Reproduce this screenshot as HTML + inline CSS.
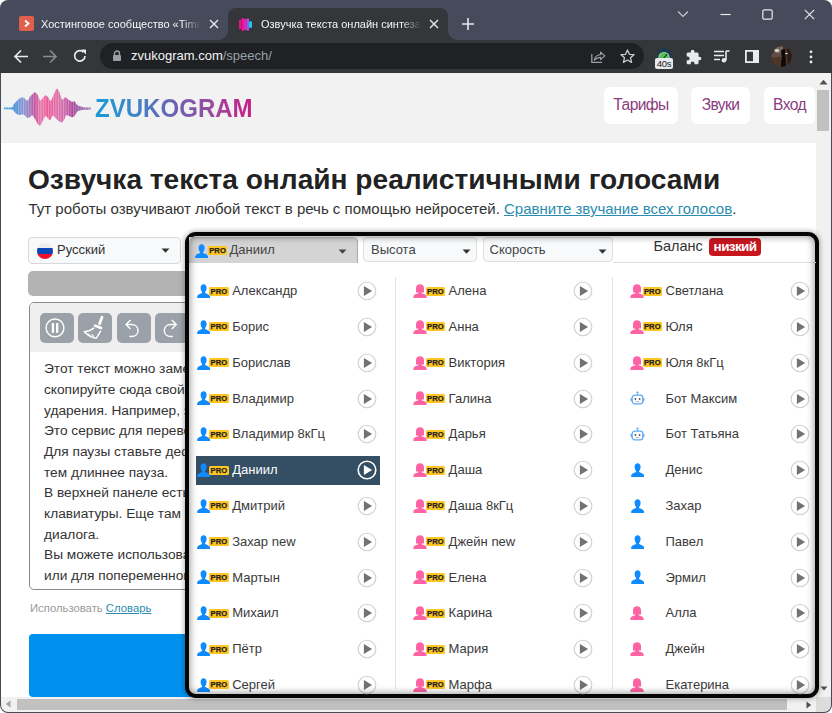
<!DOCTYPE html>
<html><head><meta charset="utf-8">
<style>
*{box-sizing:border-box}
html,body{margin:0;padding:0}
body{width:832px;height:713px;overflow:hidden;position:relative;background:#fff;font-family:"Liberation Sans",sans-serif}
.a{position:absolute}
#win{left:0;top:0;width:832px;height:713px;background:#454b5a;border-radius:8px}
#toolbar{left:0;top:40px;width:832px;height:33px;background:#35363a}
#page{left:1px;top:73px;width:815px;height:624px;background:#fff;overflow:hidden}
#vsb{left:816px;top:73px;width:15px;height:624px;background:#f1f1f1}
#hsb{left:1px;top:697px;width:815px;height:15px;background:#f1f1f1;border-radius:0 0 0 7px}
#corner{left:816px;top:697px;width:15px;height:15px;background:#dcdcdc;border-radius:0 0 7px 0}
.btn{background:#fff;border-radius:6px;color:#8a3c80;font-size:15.6px;letter-spacing:-0.6px;line-height:36px;text-align:center;white-space:nowrap}
.tb{top:313px;width:34px;height:29.6px;background:#9aa1a8;border-radius:5px}
.pro{width:19.6px;height:9px;background:#ffc520;border-radius:1.5px;font-weight:bold;font-size:7.6px;line-height:9.8px;color:#222;-webkit-text-stroke:0.25px #222;text-align:center;letter-spacing:0.1px}
.sel2{background:#f8f9fa;border:1px solid #dcdee0;border-radius:4px}
</style></head>
<body>
<div id="win" class="a"></div>
<!-- tabs -->
<div class="a" style="left:19px;top:16px;width:15px;height:15px;background:#e0604c;border-radius:2px"></div>
<svg class="a" style="left:19px;top:16px" width="15" height="15"><path d="M6 4.5 L9.5 7.5 L6 10.5" stroke="#fff" stroke-width="1.8" fill="none"/></svg>
<div class="a" style="left:41px;top:17px;width:162px;height:14px;font-size:11px;line-height:14px;color:#f4f5f6;white-space:nowrap;overflow:hidden;-webkit-mask-image:linear-gradient(to right,#000 calc(100% - 22px),transparent calc(100% - 2px))">Хостинговое сообщество «Timeweb»</div>
<svg class="a" style="left:209px;top:19px" width="10" height="10"><path d="M1 1L9 9M9 1L1 9" stroke="#e8eaed" stroke-width="1.4"/></svg>
<!-- active tab -->
<div class="a" style="left:228px;top:8px;width:220px;height:32px;background:#35363a;border-radius:8px 8px 0 0"></div>
<div class="a" style="left:218px;top:30px;width:10px;height:10px;background:radial-gradient(circle at 0 0,transparent 9.5px,#35363a 10.5px)"></div>
<div class="a" style="left:448px;top:30px;width:10px;height:10px;background:radial-gradient(circle at 100% 0,transparent 9.5px,#35363a 10.5px)"></div>
<svg class="a" style="left:238px;top:16px" width="16" height="16">
<rect x="1" y="4" width="2.5" height="9" fill="#e0148c"/><rect x="3.5" y="2" width="2.5" height="13" fill="#ee1090"/><rect x="6" y="3" width="2.5" height="11" fill="#d030c0"/><rect x="8.5" y="2.5" width="2.5" height="12" fill="#b050e0"/><rect x="11" y="5" width="3" height="7" rx="1.5" fill="#10d0f0"/>
</svg>
<div class="a" style="left:261px;top:17px;width:162px;height:14px;font-size:11px;line-height:14px;color:#f4f5f6;white-space:nowrap;overflow:hidden;-webkit-mask-image:linear-gradient(to right,#000 calc(100% - 22px),transparent calc(100% - 2px))">Озвучка текста онлайн синтезатор</div>
<svg class="a" style="left:429px;top:19px" width="10" height="10"><path d="M1 1L9 9M9 1L1 9" stroke="#e8eaed" stroke-width="1.4"/></svg>
<svg class="a" style="left:462px;top:18px" width="12" height="12"><path d="M6 0V12M0 6H12" stroke="#e8eaed" stroke-width="1.6"/></svg>
<!-- window controls -->
<svg class="a" style="left:677px;top:10px" width="12" height="8"><path d="M1 1.5L6 6.5L11 1.5" stroke="#c8cacd" stroke-width="1.2" fill="none"/></svg>
<svg class="a" style="left:720px;top:13px" width="11" height="3"><path d="M0.5 1.5H10.5" stroke="#e8eaed" stroke-width="1.2"/></svg>
<svg class="a" style="left:762px;top:9px" width="11" height="11"><rect x="0.8" y="0.8" width="9.4" height="9.4" rx="1.5" stroke="#e8eaed" stroke-width="1.2" fill="none"/></svg>
<svg class="a" style="left:804px;top:9px" width="11" height="11"><path d="M0.8 0.8L10.2 10.2M10.2 0.8L0.8 10.2" stroke="#e8eaed" stroke-width="1.2"/></svg>

<!-- toolbar -->
<div id="toolbar" class="a"></div>
<svg class="a" style="left:13px;top:49px" width="16" height="15"><path d="M15 7.5H2.5M8 1.5L2 7.5L8 13.5" stroke="#e8eaed" stroke-width="1.7" fill="none"/></svg>
<svg class="a" style="left:42px;top:49px" width="16" height="15"><path d="M1 7.5H13.5M8 1.5L14 7.5L8 13.5" stroke="#8a8b8e" stroke-width="1.7" fill="none"/></svg>
<svg class="a" style="left:72px;top:48px" width="16" height="16"><path d="M13 8A5.2 5.2 0 1 1 11.5 4.2" stroke="#e8eaed" stroke-width="1.7" fill="none"/><path d="M9 1.5H14V6.5Z" fill="#e8eaed"/></svg>
<div class="a" style="left:100px;top:43px;width:544px;height:26px;background:#202124;border-radius:13px"></div>
<svg class="a" style="left:112px;top:50px" width="10" height="12"><path d="M2.5 5V3.5A2.5 2.5 0 0 1 7.5 3.5V5" stroke="#9aa0a6" stroke-width="1.4" fill="none"/><rect x="1" y="5" width="8" height="6" rx="1" fill="#9aa0a6"/></svg>
<div class="a" style="left:131px;top:48px;font-size:13px;line-height:16px;color:#f4f5f6;white-space:nowrap">zvukogram.com<span style="color:#9aa0a6">/speech/</span></div>
<svg class="a" style="left:590px;top:49px" width="16" height="15"><path d="M1.8 5V13.4H12" stroke="#9aa0a6" stroke-width="1.3" fill="none"/><path d="M4.3 11.2C4.8 8 7.5 5.6 10.6 5.6V3.2L14.8 6.9L10.6 10.6V8.3C8 8.3 6 9.3 4.3 11.2Z" stroke="#9aa0a6" stroke-width="1.2" fill="none" stroke-linejoin="round"/></svg>
<svg class="a" style="left:620px;top:49px" width="15" height="15"><path d="M7.5 1L9.4 5.3L14 5.7L10.5 8.8L11.6 13.4L7.5 11L3.4 13.4L4.5 8.8L1 5.7L5.6 5.3Z" stroke="#c8cacd" stroke-width="1.3" fill="none" stroke-linejoin="round"/></svg>
<svg class="a" style="left:654px;top:46px" width="20" height="14"><rect x="8.3" y="2.2" width="3.4" height="2.6" fill="#0b3b5c"/><path d="M3.2 5.2L5 3.6M16.8 5.2L15 3.6" stroke="#0b3b5c" stroke-width="1.4"/><circle cx="10" cy="11.5" r="6.9" fill="#0b3b5c"/><circle cx="10" cy="11.5" r="5.6" fill="#cfe6d8"/><circle cx="10" cy="11.5" r="4.9" fill="#5cbf4c"/><path d="M9.6 12.2L13.2 8.2" stroke="#0b3b5c" stroke-width="1.2"/></svg>
<div class="a" style="left:655px;top:58px;width:18px;height:11px;background:#e8eaed;border-radius:2px;font-size:9.5px;line-height:11.5px;color:#202124;text-align:center;letter-spacing:-0.2px">40s</div>
<svg class="a" style="left:685.5px;top:48.5px" width="16" height="16" viewBox="1 0 23 23"><path d="M20.5 11H19V7c0-1.1-.9-2-2-2h-4V3.5C13 2.12 11.88 1 10.5 1S8 2.12 8 3.5V5H4c-1.1 0-1.99.9-1.99 2v3.8H3.5c1.49 0 2.7 1.210 2.7 2.7s-1.21 2.7-2.7 2.7H2V20c0 1.1.9 2 2 2h3.8v-1.5c0-1.49 1.21-2.7 2.7-2.7 1.49 0 2.7 1.21 2.7 2.7V22H17c1.1 0 2-.9 2-2v-4h1.5c1.38 0 2.5-1.12 2.5-2.5S21.88 11 20.5 11z" fill="#e8eaed"/></svg>
<svg class="a" style="left:714px;top:50px" width="16" height="13"><path d="M0 1.5H10M0 5.5H10M0 9.5H6" stroke="#e8eaed" stroke-width="1.6"/><path d="M12 1V10" stroke="#e8eaed" stroke-width="1.6"/><path d="M12 1H15.5" stroke="#e8eaed" stroke-width="1.6"/><circle cx="10" cy="10.2" r="2.3" fill="#e8eaed"/></svg>
<svg class="a" style="left:745px;top:50px" width="14" height="13"><rect x="0.9" y="0.9" width="12.2" height="11.2" stroke="#e8eaed" stroke-width="1.8" fill="none"/><rect x="8" y="1" width="5" height="11" fill="#e8eaed"/></svg>
<svg class="a" style="left:771.2px;top:45.5px" width="21" height="21"><defs><clipPath id="avc"><circle cx="10.5" cy="10.5" r="10.2"/></clipPath></defs><g clip-path="url(#avc)"><rect width="21" height="21" fill="#4a3224"/><path d="M0 9L4 5L10 4L10.5 11L0 12Z" fill="#5e4c44"/><path d="M3 0H12V5L7 8L3 6Z" fill="#76665c"/><path d="M10 4L14 3L15 21H9L11 12Z" fill="#0c0a08"/><path d="M16 0H21V21H17Z" fill="#2a1a12"/><path d="M0 12L10 11V21H0Z" fill="#4e3526"/><ellipse cx="6" cy="4.5" rx="2.2" ry="1.6" fill="#d8d4d0"/><ellipse cx="15.5" cy="7.5" rx="1.6" ry="0.8" fill="#c8c4c0"/></g></svg>
<svg class="a" style="left:809.3px;top:49.5px" width="4" height="14"><circle cx="2" cy="1.8" r="1.4" fill="#e8eaed"/><circle cx="2" cy="6.9" r="1.4" fill="#e8eaed"/><circle cx="2" cy="12" r="1.4" fill="#e8eaed"/></svg>

<!-- page -->
<div id="page" class="a"></div>
<div class="a" style="left:1px;top:73px;width:815px;height:70px;background:#f2f2f2"></div>
<svg class="a" style="left:0;top:72px" width="100" height="71" viewBox="0 72 100 71">
<defs><linearGradient id="wg" x1="4" x2="91" y1="0" y2="0" gradientUnits="userSpaceOnUse"><stop offset="0" stop-color="#40a8e8"/><stop offset="0.12" stop-color="#4a90d8"/><stop offset="0.22" stop-color="#8a9ad4"/><stop offset="0.3" stop-color="#a078b8"/><stop offset="0.35" stop-color="#c050a0"/><stop offset="0.42" stop-color="#e87aaa"/><stop offset="0.5" stop-color="#ec5a9a"/><stop offset="0.6" stop-color="#e070a8"/><stop offset="0.7" stop-color="#cc6aac"/><stop offset="0.78" stop-color="#b04a98"/><stop offset="0.86" stop-color="#9a60aa"/><stop offset="1" stop-color="#a080b8"/></linearGradient>
<pattern id="stripes" x="0.5" y="0" width="2.5" height="10" patternUnits="userSpaceOnUse"><rect x="0" y="0" width="0.9" height="10" fill="#fff" fill-opacity="0.3"/></pattern></defs>
<path d="M4.0 107.6C5.3 107.5 10.4 107.8 12.0 107.3C13.6 106.8 12.8 105.4 13.5 104.5C14.2 103.6 15.0 103.0 16.0 102.0C17.0 101.0 18.5 99.3 19.5 98.6C20.5 97.8 21.2 97.6 22.0 97.5C22.8 97.4 23.1 97.3 24.0 97.8C24.9 98.3 26.5 100.9 27.5 100.7C28.5 100.5 29.2 97.7 30.0 96.6C30.8 95.5 31.7 94.9 32.5 94.2C33.3 93.5 34.1 92.0 35.0 92.2C35.9 92.4 37.2 94.1 38.0 95.4C38.8 96.7 39.3 99.6 40.0 100.2C40.7 100.8 41.2 99.8 42.0 99.0C42.8 98.2 44.2 96.0 45.0 95.4C45.8 94.9 45.9 95.4 46.5 95.7C47.1 96.0 47.8 96.6 48.5 97.5C49.2 98.4 49.8 101.2 50.5 101.0C51.2 100.8 52.0 98.6 53.0 96.6C54.0 94.6 55.5 89.8 56.5 88.9C57.5 88.0 58.1 89.5 59.0 91.3C59.9 93.1 61.1 98.4 62.0 99.5C62.9 100.6 63.8 98.1 64.5 97.8C65.2 97.5 65.2 97.1 66.0 97.5C66.8 97.9 68.0 99.4 69.0 100.1C70.0 100.8 71.1 101.7 72.0 101.9C72.9 102.1 73.7 100.8 74.5 101.3C75.3 101.8 76.1 104.0 77.0 104.8C77.9 105.6 78.8 105.9 80.0 106.3C81.2 106.7 82.2 107.0 84.0 107.2C85.8 107.4 89.8 107.5 91.0 107.6L91.0 109.4C89.8 109.5 85.8 109.6 84.0 109.8C82.2 110.0 81.2 110.2 80.0 110.5C78.8 110.8 77.9 111.0 77.0 111.9C76.1 112.8 75.3 115.1 74.5 116.0C73.7 116.9 72.9 117.2 72.0 117.2C71.1 117.2 70.0 116.3 69.0 116.0C68.0 115.7 66.8 114.9 66.0 115.4C65.2 115.9 65.2 117.9 64.5 119.0C63.8 120.1 62.9 121.8 62.0 122.2C61.1 122.6 59.9 121.8 59.0 121.3C58.1 120.8 57.5 120.0 56.5 119.0C55.5 118.0 54.0 115.3 53.0 115.4C52.0 115.5 51.2 119.2 50.5 119.8C49.8 120.4 49.2 119.5 48.5 119.0C47.8 118.5 47.1 116.9 46.5 116.5C45.9 116.1 45.8 115.6 45.0 116.6C44.2 117.6 42.8 121.0 42.0 122.5C41.2 124.0 40.7 125.1 40.0 125.4C39.3 125.7 38.8 125.3 38.0 124.2C37.2 123.1 35.9 120.5 35.0 119.0C34.1 117.5 33.3 115.7 32.5 115.4C31.7 115.1 30.8 116.6 30.0 117.0C29.2 117.4 28.5 118.4 27.5 118.0C26.5 117.6 24.9 115.4 24.0 114.8C23.1 114.2 22.8 114.5 22.0 114.5C21.2 114.5 20.5 115.2 19.5 115.0C18.5 114.8 17.0 114.2 16.0 113.5C15.0 112.8 14.2 111.2 13.5 110.5C12.8 109.8 13.6 109.7 12.0 109.5C10.4 109.3 5.3 109.3 4.0 109.3Z" fill="url(#wg)"/>
<path d="M4.0 107.6C5.3 107.5 10.4 107.8 12.0 107.3C13.6 106.8 12.8 105.4 13.5 104.5C14.2 103.6 15.0 103.0 16.0 102.0C17.0 101.0 18.5 99.3 19.5 98.6C20.5 97.8 21.2 97.6 22.0 97.5C22.8 97.4 23.1 97.3 24.0 97.8C24.9 98.3 26.5 100.9 27.5 100.7C28.5 100.5 29.2 97.7 30.0 96.6C30.8 95.5 31.7 94.9 32.5 94.2C33.3 93.5 34.1 92.0 35.0 92.2C35.9 92.4 37.2 94.1 38.0 95.4C38.8 96.7 39.3 99.6 40.0 100.2C40.7 100.8 41.2 99.8 42.0 99.0C42.8 98.2 44.2 96.0 45.0 95.4C45.8 94.9 45.9 95.4 46.5 95.7C47.1 96.0 47.8 96.6 48.5 97.5C49.2 98.4 49.8 101.2 50.5 101.0C51.2 100.8 52.0 98.6 53.0 96.6C54.0 94.6 55.5 89.8 56.5 88.9C57.5 88.0 58.1 89.5 59.0 91.3C59.9 93.1 61.1 98.4 62.0 99.5C62.9 100.6 63.8 98.1 64.5 97.8C65.2 97.5 65.2 97.1 66.0 97.5C66.8 97.9 68.0 99.4 69.0 100.1C70.0 100.8 71.1 101.7 72.0 101.9C72.9 102.1 73.7 100.8 74.5 101.3C75.3 101.8 76.1 104.0 77.0 104.8C77.9 105.6 78.8 105.9 80.0 106.3C81.2 106.7 82.2 107.0 84.0 107.2C85.8 107.4 89.8 107.5 91.0 107.6L91.0 109.4C89.8 109.5 85.8 109.6 84.0 109.8C82.2 110.0 81.2 110.2 80.0 110.5C78.8 110.8 77.9 111.0 77.0 111.9C76.1 112.8 75.3 115.1 74.5 116.0C73.7 116.9 72.9 117.2 72.0 117.2C71.1 117.2 70.0 116.3 69.0 116.0C68.0 115.7 66.8 114.9 66.0 115.4C65.2 115.9 65.2 117.9 64.5 119.0C63.8 120.1 62.9 121.8 62.0 122.2C61.1 122.6 59.9 121.8 59.0 121.3C58.1 120.8 57.5 120.0 56.5 119.0C55.5 118.0 54.0 115.3 53.0 115.4C52.0 115.5 51.2 119.2 50.5 119.8C49.8 120.4 49.2 119.5 48.5 119.0C47.8 118.5 47.1 116.9 46.5 116.5C45.9 116.1 45.8 115.6 45.0 116.6C44.2 117.6 42.8 121.0 42.0 122.5C41.2 124.0 40.7 125.1 40.0 125.4C39.3 125.7 38.8 125.3 38.0 124.2C37.2 123.1 35.9 120.5 35.0 119.0C34.1 117.5 33.3 115.7 32.5 115.4C31.7 115.1 30.8 116.6 30.0 117.0C29.2 117.4 28.5 118.4 27.5 118.0C26.5 117.6 24.9 115.4 24.0 114.8C23.1 114.2 22.8 114.5 22.0 114.5C21.2 114.5 20.5 115.2 19.5 115.0C18.5 114.8 17.0 114.2 16.0 113.5C15.0 112.8 14.2 111.2 13.5 110.5C12.8 109.8 13.6 109.7 12.0 109.5C10.4 109.3 5.3 109.3 4.0 109.3Z" fill="url(#stripes)"/>
</svg>
<div class="a" style="left:94.5px;top:91.5px;font-weight:bold;font-size:25px;line-height:32px;white-space:nowrap;transform:scaleX(0.962);transform-origin:0 0;background:linear-gradient(90deg,#1a9cd8 0%,#3d86c8 25%,#6a62b0 50%,#9a4a9e 75%,#cc1c88 100%);-webkit-background-clip:text;background-clip:text;color:transparent">ZVUKOGRAM</div>
<div class="a btn" style="left:604px;top:87px;width:74px;height:37px">Тарифы</div>
<div class="a btn" style="left:691px;top:87px;width:59px;height:37px">Звуки</div>
<div class="a btn" style="left:764px;top:87px;width:51px;height:37px">Вход</div>
<div class="a" style="left:28px;top:162.5px;font-weight:bold;font-size:28.1px;line-height:34px;color:#222;white-space:nowrap">Озвучка текста онлайн реалистичными голосами</div>
<div class="a" style="left:28.5px;top:199px;font-size:15px;line-height:20px;color:#333;white-space:nowrap">Тут роботы озвучивают любой текст в речь с помощью нейросетей. <span style="color:#2b8cb0;text-decoration:underline">Сравните звучание всех голосов</span>.</div>
<!-- left select -->
<div class="a" style="left:28px;top:237px;width:153px;height:27px;background:#f8f9fa;border:1px solid #d6d8da;border-radius:4px"></div>
<div class="a" style="left:36.5px;top:242.5px;width:16.5px;height:16.5px;border-radius:50%;background:linear-gradient(#eeeeee 0 33%,#0c47b7 33% 66%,#f0102a 66%)"></div>
<div class="a" style="left:57px;top:237px;font-size:13px;line-height:26px;color:#333;white-space:nowrap">Русский</div>
<svg class="a" style="left:161px;top:248px" width="9" height="5"><path d="M0.5 0.5H8.5L4.5 4.8Z" fill="#333"/></svg>
<div class="a" style="left:28px;top:271px;width:400px;height:25px;background:#b3b3b3;border-radius:5px"></div>
<!-- editor -->
<div class="a" style="left:28.5px;top:302px;width:400px;height:288px;border:1.5px solid #8a8a8a;border-radius:5px;background:#fff;overflow:hidden">
 <div class="a" style="left:0;top:0;width:400px;height:49.3px;background:#efefef"></div>
</div>
<div class="a tb" style="left:39.5px"></div><div class="a tb" style="left:78px"></div><div class="a tb" style="left:116.7px"></div><div class="a tb" style="left:155.3px"></div>
<svg class="a" style="left:39px;top:313px" width="34" height="30"><circle cx="16" cy="14.9" r="8.9" stroke="#fff" stroke-width="1.4" fill="none"/><rect x="12.8" y="10.1" width="2.3" height="9.7" fill="#fff"/><rect x="17" y="10.1" width="2.3" height="9.7" fill="#fff"/></svg>
<svg class="a" style="left:78px;top:313px" width="34" height="30"><path d="M24 4.2L21.6 10.8" stroke="#fff" stroke-width="2.8" stroke-linecap="round"/><path d="M17 12.6L23 15" stroke="#fff" stroke-width="2.6" stroke-linecap="round"/><path d="M15.8 15C13.5 17 9.5 18.4 6.2 18.7C9.5 22 14 24.8 18.2 25.2C19.6 23 21.3 20.5 22.6 18.2" stroke="#fff" stroke-width="1.5" fill="none" stroke-linejoin="round" stroke-linecap="round"/><path d="M9.5 20.8C10.8 21.3 11.8 22 12.3 23.2M13.6 21.2C14.6 21.9 15.2 22.8 15.6 24" stroke="#fff" stroke-width="1.2" fill="none"/></svg>
<svg class="a" style="left:116.7px;top:313px" width="34" height="30"><path d="M13.5 7L9 11.5L13.5 16" stroke="#fff" stroke-width="1.4" fill="none"/><path d="M9.5 11.5H14.5C18.5 11.5 21 14 21 17.5C21 21 18.5 23.5 14.5 23.5H12.5" stroke="#fff" stroke-width="1.4" fill="none"/></svg>
<svg class="a" style="left:155.3px;top:313px" width="34" height="30"><path d="M16.8 7L21.3 11.5L16.8 16" stroke="#fff" stroke-width="1.4" fill="none"/><path d="M20.8 11.5H15.8C11.8 11.5 9.3 14 9.3 17.5C9.3 21 11.8 23.5 15.8 23.5H17.8" stroke="#fff" stroke-width="1.4" fill="none"/></svg>
<div class="a" style="left:44px;top:359.1px;font-size:13.7px;line-height:20.7px;color:#333;white-space:nowrap">Этот текст можно заменить на свой<br>скопируйте сюда свой текст и<br>ударения. Например, звук<br>Это сервис для перевода<br>Для паузы ставьте дефис<br>тем длиннее пауза.<br>В верхней панеле есть кнопки<br>клавиатуры. Еще там есть<br>диалога.<br>Вы можете использовать<br>или для попеременного</div>
<div class="a" style="left:30px;top:599.5px;font-size:11.3px;line-height:16px;color:#9a9a9a;white-space:nowrap">Использовать <span style="color:#2b8cb0;text-decoration:underline">Словарь</span></div>
<div class="a" style="left:28.5px;top:634px;width:400px;height:62.5px;background:#0091ee;border-radius:4px"></div>

<!-- scrollbars -->
<div id="vsb" class="a"></div>
<svg class="a" style="left:819px;top:78.5px" width="9" height="6"><path d="M0.5 5.5H8.5L4.5 0.8Z" fill="#505050"/></svg>
<div class="a" style="left:817px;top:90px;width:12px;height:41px;background:#c1c1c1"></div>
<svg class="a" style="left:819.5px;top:685.5px" width="8" height="5"><path d="M0.5 0.5H7.5L4 4.5Z" fill="#505050"/></svg>
<div id="hsb" class="a"></div>
<svg class="a" style="left:5px;top:700px" width="6" height="8"><path d="M5.5 0.5V7.5L0.8 4Z" fill="#a3a3a3"/></svg>
<div class="a" style="left:16.5px;top:699px;width:770px;height:10.5px;background:#c1c1c1"></div>
<svg class="a" style="left:805.5px;top:700.5px" width="6" height="8"><path d="M0.5 0.5V7.5L5.2 4Z" fill="#505050"/></svg>
<div id="corner" class="a"></div>
<!--PANEL-->
<div class="a" style="left:185px;top:232px;width:634px;height:466px;background:#fff;border:4px solid #050505;border-radius:11px;box-shadow:0 0 5px 1px rgba(0,0,0,0.3)">
</div>
<div class="a" style="left:189px;top:236.5px;width:168.5px;height:26px;background:#d4d4d4;border-top:1px solid #c0c0c0;border-right:1px solid #a8a8a8;border-radius:0 5px 0 0"></div>
<svg class="a" style="left:194.6px;top:243.6px" width="14" height="15" viewBox="0 0 14 15"><path d="M6.6 0.3C4.9 0.3 3.6 1.6 3.6 3.6C3.6 5.5 4.3 7.4 5.1 8.2V9.1C3.8 9.7 0.6 10.5 0.2 12.2V14H13V12.2C12.6 10.5 9.4 9.7 8.1 9.1V8.2C8.9 7.4 9.6 5.5 9.6 3.6C9.6 1.6 8.3 0.3 6.6 0.3Z" fill="#108bfe"/></svg>
<div class="a pro" style="left:207.8px;top:245.6px">PRO</div>
<div class="a" style="left:229.5px;top:237px;font-size:13px;line-height:26px;color:#444;white-space:nowrap">Даниил</div>
<svg class="a" style="left:338px;top:248.6px" width="9" height="5"><path d="M0.5 0.5H8.5L4.5 4.8Z" fill="#444"/></svg>
<div class="a sel2" style="left:363px;top:237.2px;width:113.5px;height:25px"></div>
<div class="a" style="left:371px;top:236.5px;font-size:13px;line-height:26px;color:#444;white-space:nowrap">Высота</div>
<svg class="a" style="left:461.5px;top:248.5px" width="9" height="5"><path d="M0.5 0.5H8.5L4.5 4.8Z" fill="#333"/></svg>
<div class="a sel2" style="left:482.5px;top:237px;width:130.5px;height:25px"></div>
<div class="a" style="left:489.5px;top:236.5px;font-size:13px;line-height:26px;color:#444;white-space:nowrap">Скорость</div>
<svg class="a" style="left:597.5px;top:248.5px" width="9" height="5"><path d="M0.5 0.5H8.5L4.5 4.8Z" fill="#333"/></svg>
<div class="a" style="left:613px;top:261.5px;width:203px;height:1px;background:#dedede"></div>
<div class="a" style="left:653.5px;top:235px;font-size:14.5px;line-height:22px;color:#333;white-space:nowrap">Баланс</div>
<div class="a" style="left:708.8px;top:238.2px;width:52.5px;height:17.5px;background:#c8161e;border-radius:4px;color:#fff;font-weight:bold;font-size:13.5px;letter-spacing:-0.6px;line-height:17px;text-align:center">низкий</div>
<svg class="a" style="left:197.2px;top:284.0px" width="14" height="15" viewBox="0 0 14 15"><path d="M6.6 0.3C4.9 0.3 3.6 1.6 3.6 3.6C3.6 5.5 4.3 7.4 5.1 8.2V9.1C3.8 9.7 0.6 10.5 0.2 12.2V14H13V12.2C12.6 10.5 9.4 9.7 8.1 9.1V8.2C8.9 7.4 9.6 5.5 9.6 3.6C9.6 1.6 8.3 0.3 6.6 0.3Z" fill="#108bfe"/></svg>
<div class="a pro" style="left:209.2px;top:286.6px">PRO</div>
<div class="a" style="left:232.2px;top:278.2px;font-size:13px;line-height:26px;color:#3a3a3a;white-space:nowrap">Александр</div>
<svg class="a" style="left:356.5px;top:281.2px" width="20" height="20"><circle cx="10" cy="10" r="8.8" stroke="#cfcfcf" stroke-width="1.1" fill="none"/><path d="M6.9 5.1L15.1 10L6.9 14.9Z" fill="#727272"/></svg>
<svg class="a" style="left:197.2px;top:319.8px" width="14" height="15" viewBox="0 0 14 15"><path d="M6.6 0.3C4.9 0.3 3.6 1.6 3.6 3.6C3.6 5.5 4.3 7.4 5.1 8.2V9.1C3.8 9.7 0.6 10.5 0.2 12.2V14H13V12.2C12.6 10.5 9.4 9.7 8.1 9.1V8.2C8.9 7.4 9.6 5.5 9.6 3.6C9.6 1.6 8.3 0.3 6.6 0.3Z" fill="#108bfe"/></svg>
<div class="a pro" style="left:209.2px;top:322.4px">PRO</div>
<div class="a" style="left:232.2px;top:314.0px;font-size:13px;line-height:26px;color:#3a3a3a;white-space:nowrap">Борис</div>
<svg class="a" style="left:356.5px;top:317.0px" width="20" height="20"><circle cx="10" cy="10" r="8.8" stroke="#cfcfcf" stroke-width="1.1" fill="none"/><path d="M6.9 5.1L15.1 10L6.9 14.9Z" fill="#727272"/></svg>
<svg class="a" style="left:197.2px;top:355.6px" width="14" height="15" viewBox="0 0 14 15"><path d="M6.6 0.3C4.9 0.3 3.6 1.6 3.6 3.6C3.6 5.5 4.3 7.4 5.1 8.2V9.1C3.8 9.7 0.6 10.5 0.2 12.2V14H13V12.2C12.6 10.5 9.4 9.7 8.1 9.1V8.2C8.9 7.4 9.6 5.5 9.6 3.6C9.6 1.6 8.3 0.3 6.6 0.3Z" fill="#108bfe"/></svg>
<div class="a pro" style="left:209.2px;top:358.2px">PRO</div>
<div class="a" style="left:232.2px;top:349.8px;font-size:13px;line-height:26px;color:#3a3a3a;white-space:nowrap">Борислав</div>
<svg class="a" style="left:356.5px;top:352.8px" width="20" height="20"><circle cx="10" cy="10" r="8.8" stroke="#cfcfcf" stroke-width="1.1" fill="none"/><path d="M6.9 5.1L15.1 10L6.9 14.9Z" fill="#727272"/></svg>
<svg class="a" style="left:197.2px;top:391.4px" width="14" height="15" viewBox="0 0 14 15"><path d="M6.6 0.3C4.9 0.3 3.6 1.6 3.6 3.6C3.6 5.5 4.3 7.4 5.1 8.2V9.1C3.8 9.7 0.6 10.5 0.2 12.2V14H13V12.2C12.6 10.5 9.4 9.7 8.1 9.1V8.2C8.9 7.4 9.6 5.5 9.6 3.6C9.6 1.6 8.3 0.3 6.6 0.3Z" fill="#108bfe"/></svg>
<div class="a pro" style="left:209.2px;top:394.0px">PRO</div>
<div class="a" style="left:232.2px;top:385.6px;font-size:13px;line-height:26px;color:#3a3a3a;white-space:nowrap">Владимир</div>
<svg class="a" style="left:356.5px;top:388.6px" width="20" height="20"><circle cx="10" cy="10" r="8.8" stroke="#cfcfcf" stroke-width="1.1" fill="none"/><path d="M6.9 5.1L15.1 10L6.9 14.9Z" fill="#727272"/></svg>
<svg class="a" style="left:197.2px;top:427.2px" width="14" height="15" viewBox="0 0 14 15"><path d="M6.6 0.3C4.9 0.3 3.6 1.6 3.6 3.6C3.6 5.5 4.3 7.4 5.1 8.2V9.1C3.8 9.7 0.6 10.5 0.2 12.2V14H13V12.2C12.6 10.5 9.4 9.7 8.1 9.1V8.2C8.9 7.4 9.6 5.5 9.6 3.6C9.6 1.6 8.3 0.3 6.6 0.3Z" fill="#108bfe"/></svg>
<div class="a pro" style="left:209.2px;top:429.8px">PRO</div>
<div class="a" style="left:232.2px;top:421.4px;font-size:13px;line-height:26px;color:#3a3a3a;white-space:nowrap">Владимир 8кГц</div>
<svg class="a" style="left:356.5px;top:424.4px" width="20" height="20"><circle cx="10" cy="10" r="8.8" stroke="#cfcfcf" stroke-width="1.1" fill="none"/><path d="M6.9 5.1L15.1 10L6.9 14.9Z" fill="#727272"/></svg>
<div class="a" style="left:195.7px;top:455.7px;width:184.5px;height:29px;background:#344e64"></div>
<svg class="a" style="left:197.2px;top:463.0px" width="14" height="15" viewBox="0 0 14 15"><path d="M6.6 0.3C4.9 0.3 3.6 1.6 3.6 3.6C3.6 5.5 4.3 7.4 5.1 8.2V9.1C3.8 9.7 0.6 10.5 0.2 12.2V14H13V12.2C12.6 10.5 9.4 9.7 8.1 9.1V8.2C8.9 7.4 9.6 5.5 9.6 3.6C9.6 1.6 8.3 0.3 6.6 0.3Z" fill="#108bfe"/></svg>
<div class="a pro" style="left:209.2px;top:465.6px">PRO</div>
<div class="a" style="left:232.2px;top:457.2px;font-size:13px;line-height:26px;color:#fff;white-space:nowrap">Даниил</div>
<svg class="a" style="left:356.5px;top:460.2px" width="20" height="20"><circle cx="10" cy="10" r="8.8" stroke="#fff" stroke-width="1.6" fill="none"/><path d="M6.9 5.1L15.1 10L6.9 14.9Z" fill="#fff"/></svg>
<svg class="a" style="left:197.2px;top:498.8px" width="14" height="15" viewBox="0 0 14 15"><path d="M6.6 0.3C4.9 0.3 3.6 1.6 3.6 3.6C3.6 5.5 4.3 7.4 5.1 8.2V9.1C3.8 9.7 0.6 10.5 0.2 12.2V14H13V12.2C12.6 10.5 9.4 9.7 8.1 9.1V8.2C8.9 7.4 9.6 5.5 9.6 3.6C9.6 1.6 8.3 0.3 6.6 0.3Z" fill="#108bfe"/></svg>
<div class="a pro" style="left:209.2px;top:501.4px">PRO</div>
<div class="a" style="left:232.2px;top:493.0px;font-size:13px;line-height:26px;color:#3a3a3a;white-space:nowrap">Дмитрий</div>
<svg class="a" style="left:356.5px;top:496.0px" width="20" height="20"><circle cx="10" cy="10" r="8.8" stroke="#cfcfcf" stroke-width="1.1" fill="none"/><path d="M6.9 5.1L15.1 10L6.9 14.9Z" fill="#727272"/></svg>
<svg class="a" style="left:197.2px;top:534.6px" width="14" height="15" viewBox="0 0 14 15"><path d="M6.6 0.3C4.9 0.3 3.6 1.6 3.6 3.6C3.6 5.5 4.3 7.4 5.1 8.2V9.1C3.8 9.7 0.6 10.5 0.2 12.2V14H13V12.2C12.6 10.5 9.4 9.7 8.1 9.1V8.2C8.9 7.4 9.6 5.5 9.6 3.6C9.6 1.6 8.3 0.3 6.6 0.3Z" fill="#108bfe"/></svg>
<div class="a pro" style="left:209.2px;top:537.2px">PRO</div>
<div class="a" style="left:232.2px;top:528.8px;font-size:13px;line-height:26px;color:#3a3a3a;white-space:nowrap">Захар new</div>
<svg class="a" style="left:356.5px;top:531.8px" width="20" height="20"><circle cx="10" cy="10" r="8.8" stroke="#cfcfcf" stroke-width="1.1" fill="none"/><path d="M6.9 5.1L15.1 10L6.9 14.9Z" fill="#727272"/></svg>
<svg class="a" style="left:197.2px;top:570.4px" width="14" height="15" viewBox="0 0 14 15"><path d="M6.6 0.3C4.9 0.3 3.6 1.6 3.6 3.6C3.6 5.5 4.3 7.4 5.1 8.2V9.1C3.8 9.7 0.6 10.5 0.2 12.2V14H13V12.2C12.6 10.5 9.4 9.7 8.1 9.1V8.2C8.9 7.4 9.6 5.5 9.6 3.6C9.6 1.6 8.3 0.3 6.6 0.3Z" fill="#108bfe"/></svg>
<div class="a pro" style="left:209.2px;top:573.0px">PRO</div>
<div class="a" style="left:232.2px;top:564.6px;font-size:13px;line-height:26px;color:#3a3a3a;white-space:nowrap">Мартын</div>
<svg class="a" style="left:356.5px;top:567.6px" width="20" height="20"><circle cx="10" cy="10" r="8.8" stroke="#cfcfcf" stroke-width="1.1" fill="none"/><path d="M6.9 5.1L15.1 10L6.9 14.9Z" fill="#727272"/></svg>
<svg class="a" style="left:197.2px;top:606.2px" width="14" height="15" viewBox="0 0 14 15"><path d="M6.6 0.3C4.9 0.3 3.6 1.6 3.6 3.6C3.6 5.5 4.3 7.4 5.1 8.2V9.1C3.8 9.7 0.6 10.5 0.2 12.2V14H13V12.2C12.6 10.5 9.4 9.7 8.1 9.1V8.2C8.9 7.4 9.6 5.5 9.6 3.6C9.6 1.6 8.3 0.3 6.6 0.3Z" fill="#108bfe"/></svg>
<div class="a pro" style="left:209.2px;top:608.8px">PRO</div>
<div class="a" style="left:232.2px;top:600.4px;font-size:13px;line-height:26px;color:#3a3a3a;white-space:nowrap">Михаил</div>
<svg class="a" style="left:356.5px;top:603.4px" width="20" height="20"><circle cx="10" cy="10" r="8.8" stroke="#cfcfcf" stroke-width="1.1" fill="none"/><path d="M6.9 5.1L15.1 10L6.9 14.9Z" fill="#727272"/></svg>
<svg class="a" style="left:197.2px;top:642.0px" width="14" height="15" viewBox="0 0 14 15"><path d="M6.6 0.3C4.9 0.3 3.6 1.6 3.6 3.6C3.6 5.5 4.3 7.4 5.1 8.2V9.1C3.8 9.7 0.6 10.5 0.2 12.2V14H13V12.2C12.6 10.5 9.4 9.7 8.1 9.1V8.2C8.9 7.4 9.6 5.5 9.6 3.6C9.6 1.6 8.3 0.3 6.6 0.3Z" fill="#108bfe"/></svg>
<div class="a pro" style="left:209.2px;top:644.6px">PRO</div>
<div class="a" style="left:232.2px;top:636.2px;font-size:13px;line-height:26px;color:#3a3a3a;white-space:nowrap">Пётр</div>
<svg class="a" style="left:356.5px;top:639.2px" width="20" height="20"><circle cx="10" cy="10" r="8.8" stroke="#cfcfcf" stroke-width="1.1" fill="none"/><path d="M6.9 5.1L15.1 10L6.9 14.9Z" fill="#727272"/></svg>
<svg class="a" style="left:197.2px;top:677.8px" width="14" height="15" viewBox="0 0 14 15"><path d="M6.6 0.3C4.9 0.3 3.6 1.6 3.6 3.6C3.6 5.5 4.3 7.4 5.1 8.2V9.1C3.8 9.7 0.6 10.5 0.2 12.2V14H13V12.2C12.6 10.5 9.4 9.7 8.1 9.1V8.2C8.9 7.4 9.6 5.5 9.6 3.6C9.6 1.6 8.3 0.3 6.6 0.3Z" fill="#108bfe"/></svg>
<div class="a pro" style="left:209.2px;top:680.4px">PRO</div>
<div class="a" style="left:232.2px;top:672.0px;font-size:13px;line-height:26px;color:#3a3a3a;white-space:nowrap">Сергей</div>
<svg class="a" style="left:356.5px;top:675.0px" width="20" height="20"><circle cx="10" cy="10" r="8.8" stroke="#cfcfcf" stroke-width="1.1" fill="none"/><path d="M6.9 5.1L15.1 10L6.9 14.9Z" fill="#727272"/></svg>
<div class="a" style="left:394.6px;top:276.5px;width:1px;height:412px;background:#e2e2e2"></div>
<svg class="a" style="left:413.3px;top:284.0px" width="14" height="15" viewBox="0 0 14 15"><path d="M7 0.2C4.6 0.2 3 1.7 3 4V8.5H5.3V9.2C3.8 9.8 0.8 10.4 0.4 12.2V14H13.6V12.2C13.2 10.4 10.2 9.8 8.7 9.2V8.5H11V4C11 1.7 9.4 0.2 7 0.2Z" fill="#fe64a3"/></svg>
<div class="a pro" style="left:425.6px;top:286.6px">PRO</div>
<div class="a" style="left:448.6px;top:278.2px;font-size:13px;line-height:26px;color:#3a3a3a;white-space:nowrap">Алена</div>
<svg class="a" style="left:572.9px;top:281.2px" width="20" height="20"><circle cx="10" cy="10" r="8.8" stroke="#cfcfcf" stroke-width="1.1" fill="none"/><path d="M6.9 5.1L15.1 10L6.9 14.9Z" fill="#727272"/></svg>
<svg class="a" style="left:413.3px;top:319.8px" width="14" height="15" viewBox="0 0 14 15"><path d="M7 0.2C4.6 0.2 3 1.7 3 4V8.5H5.3V9.2C3.8 9.8 0.8 10.4 0.4 12.2V14H13.6V12.2C13.2 10.4 10.2 9.8 8.7 9.2V8.5H11V4C11 1.7 9.4 0.2 7 0.2Z" fill="#fe64a3"/></svg>
<div class="a pro" style="left:425.6px;top:322.4px">PRO</div>
<div class="a" style="left:448.6px;top:314.0px;font-size:13px;line-height:26px;color:#3a3a3a;white-space:nowrap">Анна</div>
<svg class="a" style="left:572.9px;top:317.0px" width="20" height="20"><circle cx="10" cy="10" r="8.8" stroke="#cfcfcf" stroke-width="1.1" fill="none"/><path d="M6.9 5.1L15.1 10L6.9 14.9Z" fill="#727272"/></svg>
<svg class="a" style="left:413.3px;top:355.6px" width="14" height="15" viewBox="0 0 14 15"><path d="M7 0.2C4.6 0.2 3 1.7 3 4V8.5H5.3V9.2C3.8 9.8 0.8 10.4 0.4 12.2V14H13.6V12.2C13.2 10.4 10.2 9.8 8.7 9.2V8.5H11V4C11 1.7 9.4 0.2 7 0.2Z" fill="#fe64a3"/></svg>
<div class="a pro" style="left:425.6px;top:358.2px">PRO</div>
<div class="a" style="left:448.6px;top:349.8px;font-size:13px;line-height:26px;color:#3a3a3a;white-space:nowrap">Виктория</div>
<svg class="a" style="left:572.9px;top:352.8px" width="20" height="20"><circle cx="10" cy="10" r="8.8" stroke="#cfcfcf" stroke-width="1.1" fill="none"/><path d="M6.9 5.1L15.1 10L6.9 14.9Z" fill="#727272"/></svg>
<svg class="a" style="left:413.3px;top:391.4px" width="14" height="15" viewBox="0 0 14 15"><path d="M7 0.2C4.6 0.2 3 1.7 3 4V8.5H5.3V9.2C3.8 9.8 0.8 10.4 0.4 12.2V14H13.6V12.2C13.2 10.4 10.2 9.8 8.7 9.2V8.5H11V4C11 1.7 9.4 0.2 7 0.2Z" fill="#fe64a3"/></svg>
<div class="a pro" style="left:425.6px;top:394.0px">PRO</div>
<div class="a" style="left:448.6px;top:385.6px;font-size:13px;line-height:26px;color:#3a3a3a;white-space:nowrap">Галина</div>
<svg class="a" style="left:572.9px;top:388.6px" width="20" height="20"><circle cx="10" cy="10" r="8.8" stroke="#cfcfcf" stroke-width="1.1" fill="none"/><path d="M6.9 5.1L15.1 10L6.9 14.9Z" fill="#727272"/></svg>
<svg class="a" style="left:413.3px;top:427.2px" width="14" height="15" viewBox="0 0 14 15"><path d="M7 0.2C4.6 0.2 3 1.7 3 4V8.5H5.3V9.2C3.8 9.8 0.8 10.4 0.4 12.2V14H13.6V12.2C13.2 10.4 10.2 9.8 8.7 9.2V8.5H11V4C11 1.7 9.4 0.2 7 0.2Z" fill="#fe64a3"/></svg>
<div class="a pro" style="left:425.6px;top:429.8px">PRO</div>
<div class="a" style="left:448.6px;top:421.4px;font-size:13px;line-height:26px;color:#3a3a3a;white-space:nowrap">Дарья</div>
<svg class="a" style="left:572.9px;top:424.4px" width="20" height="20"><circle cx="10" cy="10" r="8.8" stroke="#cfcfcf" stroke-width="1.1" fill="none"/><path d="M6.9 5.1L15.1 10L6.9 14.9Z" fill="#727272"/></svg>
<svg class="a" style="left:413.3px;top:463.0px" width="14" height="15" viewBox="0 0 14 15"><path d="M7 0.2C4.6 0.2 3 1.7 3 4V8.5H5.3V9.2C3.8 9.8 0.8 10.4 0.4 12.2V14H13.6V12.2C13.2 10.4 10.2 9.8 8.7 9.2V8.5H11V4C11 1.7 9.4 0.2 7 0.2Z" fill="#fe64a3"/></svg>
<div class="a pro" style="left:425.6px;top:465.6px">PRO</div>
<div class="a" style="left:448.6px;top:457.2px;font-size:13px;line-height:26px;color:#3a3a3a;white-space:nowrap">Даша</div>
<svg class="a" style="left:572.9px;top:460.2px" width="20" height="20"><circle cx="10" cy="10" r="8.8" stroke="#cfcfcf" stroke-width="1.1" fill="none"/><path d="M6.9 5.1L15.1 10L6.9 14.9Z" fill="#727272"/></svg>
<svg class="a" style="left:413.3px;top:498.8px" width="14" height="15" viewBox="0 0 14 15"><path d="M7 0.2C4.6 0.2 3 1.7 3 4V8.5H5.3V9.2C3.8 9.8 0.8 10.4 0.4 12.2V14H13.6V12.2C13.2 10.4 10.2 9.8 8.7 9.2V8.5H11V4C11 1.7 9.4 0.2 7 0.2Z" fill="#fe64a3"/></svg>
<div class="a pro" style="left:425.6px;top:501.4px">PRO</div>
<div class="a" style="left:448.6px;top:493.0px;font-size:13px;line-height:26px;color:#3a3a3a;white-space:nowrap">Даша 8кГц</div>
<svg class="a" style="left:572.9px;top:496.0px" width="20" height="20"><circle cx="10" cy="10" r="8.8" stroke="#cfcfcf" stroke-width="1.1" fill="none"/><path d="M6.9 5.1L15.1 10L6.9 14.9Z" fill="#727272"/></svg>
<svg class="a" style="left:413.3px;top:534.6px" width="14" height="15" viewBox="0 0 14 15"><path d="M7 0.2C4.6 0.2 3 1.7 3 4V8.5H5.3V9.2C3.8 9.8 0.8 10.4 0.4 12.2V14H13.6V12.2C13.2 10.4 10.2 9.8 8.7 9.2V8.5H11V4C11 1.7 9.4 0.2 7 0.2Z" fill="#fe64a3"/></svg>
<div class="a pro" style="left:425.6px;top:537.2px">PRO</div>
<div class="a" style="left:448.6px;top:528.8px;font-size:13px;line-height:26px;color:#3a3a3a;white-space:nowrap">Джейн new</div>
<svg class="a" style="left:572.9px;top:531.8px" width="20" height="20"><circle cx="10" cy="10" r="8.8" stroke="#cfcfcf" stroke-width="1.1" fill="none"/><path d="M6.9 5.1L15.1 10L6.9 14.9Z" fill="#727272"/></svg>
<svg class="a" style="left:413.3px;top:570.4px" width="14" height="15" viewBox="0 0 14 15"><path d="M7 0.2C4.6 0.2 3 1.7 3 4V8.5H5.3V9.2C3.8 9.8 0.8 10.4 0.4 12.2V14H13.6V12.2C13.2 10.4 10.2 9.8 8.7 9.2V8.5H11V4C11 1.7 9.4 0.2 7 0.2Z" fill="#fe64a3"/></svg>
<div class="a pro" style="left:425.6px;top:573.0px">PRO</div>
<div class="a" style="left:448.6px;top:564.6px;font-size:13px;line-height:26px;color:#3a3a3a;white-space:nowrap">Елена</div>
<svg class="a" style="left:572.9px;top:567.6px" width="20" height="20"><circle cx="10" cy="10" r="8.8" stroke="#cfcfcf" stroke-width="1.1" fill="none"/><path d="M6.9 5.1L15.1 10L6.9 14.9Z" fill="#727272"/></svg>
<svg class="a" style="left:413.3px;top:606.2px" width="14" height="15" viewBox="0 0 14 15"><path d="M7 0.2C4.6 0.2 3 1.7 3 4V8.5H5.3V9.2C3.8 9.8 0.8 10.4 0.4 12.2V14H13.6V12.2C13.2 10.4 10.2 9.8 8.7 9.2V8.5H11V4C11 1.7 9.4 0.2 7 0.2Z" fill="#fe64a3"/></svg>
<div class="a pro" style="left:425.6px;top:608.8px">PRO</div>
<div class="a" style="left:448.6px;top:600.4px;font-size:13px;line-height:26px;color:#3a3a3a;white-space:nowrap">Карина</div>
<svg class="a" style="left:572.9px;top:603.4px" width="20" height="20"><circle cx="10" cy="10" r="8.8" stroke="#cfcfcf" stroke-width="1.1" fill="none"/><path d="M6.9 5.1L15.1 10L6.9 14.9Z" fill="#727272"/></svg>
<svg class="a" style="left:413.3px;top:642.0px" width="14" height="15" viewBox="0 0 14 15"><path d="M7 0.2C4.6 0.2 3 1.7 3 4V8.5H5.3V9.2C3.8 9.8 0.8 10.4 0.4 12.2V14H13.6V12.2C13.2 10.4 10.2 9.8 8.7 9.2V8.5H11V4C11 1.7 9.4 0.2 7 0.2Z" fill="#fe64a3"/></svg>
<div class="a pro" style="left:425.6px;top:644.6px">PRO</div>
<div class="a" style="left:448.6px;top:636.2px;font-size:13px;line-height:26px;color:#3a3a3a;white-space:nowrap">Мария</div>
<svg class="a" style="left:572.9px;top:639.2px" width="20" height="20"><circle cx="10" cy="10" r="8.8" stroke="#cfcfcf" stroke-width="1.1" fill="none"/><path d="M6.9 5.1L15.1 10L6.9 14.9Z" fill="#727272"/></svg>
<svg class="a" style="left:413.3px;top:677.8px" width="14" height="15" viewBox="0 0 14 15"><path d="M7 0.2C4.6 0.2 3 1.7 3 4V8.5H5.3V9.2C3.8 9.8 0.8 10.4 0.4 12.2V14H13.6V12.2C13.2 10.4 10.2 9.8 8.7 9.2V8.5H11V4C11 1.7 9.4 0.2 7 0.2Z" fill="#fe64a3"/></svg>
<div class="a pro" style="left:425.6px;top:680.4px">PRO</div>
<div class="a" style="left:448.6px;top:672.0px;font-size:13px;line-height:26px;color:#3a3a3a;white-space:nowrap">Марфа</div>
<svg class="a" style="left:572.9px;top:675.0px" width="20" height="20"><circle cx="10" cy="10" r="8.8" stroke="#cfcfcf" stroke-width="1.1" fill="none"/><path d="M6.9 5.1L15.1 10L6.9 14.9Z" fill="#727272"/></svg>
<div class="a" style="left:611.5px;top:276.5px;width:1px;height:412px;background:#e2e2e2"></div>
<svg class="a" style="left:630.2px;top:284.0px" width="14" height="15" viewBox="0 0 14 15"><path d="M7 0.2C4.6 0.2 3 1.7 3 4V8.5H5.3V9.2C3.8 9.8 0.8 10.4 0.4 12.2V14H13.6V12.2C13.2 10.4 10.2 9.8 8.7 9.2V8.5H11V4C11 1.7 9.4 0.2 7 0.2Z" fill="#fe64a3"/></svg>
<div class="a pro" style="left:642.5px;top:286.6px">PRO</div>
<div class="a" style="left:665.5px;top:278.2px;font-size:13px;line-height:26px;color:#3a3a3a;white-space:nowrap">Светлана</div>
<svg class="a" style="left:789.8px;top:281.2px" width="20" height="20"><circle cx="10" cy="10" r="8.8" stroke="#cfcfcf" stroke-width="1.1" fill="none"/><path d="M6.9 5.1L15.1 10L6.9 14.9Z" fill="#727272"/></svg>
<svg class="a" style="left:630.2px;top:319.8px" width="14" height="15" viewBox="0 0 14 15"><path d="M7 0.2C4.6 0.2 3 1.7 3 4V8.5H5.3V9.2C3.8 9.8 0.8 10.4 0.4 12.2V14H13.6V12.2C13.2 10.4 10.2 9.8 8.7 9.2V8.5H11V4C11 1.7 9.4 0.2 7 0.2Z" fill="#fe64a3"/></svg>
<div class="a pro" style="left:642.5px;top:322.4px">PRO</div>
<div class="a" style="left:665.5px;top:314.0px;font-size:13px;line-height:26px;color:#3a3a3a;white-space:nowrap">Юля</div>
<svg class="a" style="left:789.8px;top:317.0px" width="20" height="20"><circle cx="10" cy="10" r="8.8" stroke="#cfcfcf" stroke-width="1.1" fill="none"/><path d="M6.9 5.1L15.1 10L6.9 14.9Z" fill="#727272"/></svg>
<svg class="a" style="left:630.2px;top:355.6px" width="14" height="15" viewBox="0 0 14 15"><path d="M7 0.2C4.6 0.2 3 1.7 3 4V8.5H5.3V9.2C3.8 9.8 0.8 10.4 0.4 12.2V14H13.6V12.2C13.2 10.4 10.2 9.8 8.7 9.2V8.5H11V4C11 1.7 9.4 0.2 7 0.2Z" fill="#fe64a3"/></svg>
<div class="a pro" style="left:642.5px;top:358.2px">PRO</div>
<div class="a" style="left:665.5px;top:349.8px;font-size:13px;line-height:26px;color:#3a3a3a;white-space:nowrap">Юля 8кГц</div>
<svg class="a" style="left:789.8px;top:352.8px" width="20" height="20"><circle cx="10" cy="10" r="8.8" stroke="#cfcfcf" stroke-width="1.1" fill="none"/><path d="M6.9 5.1L15.1 10L6.9 14.9Z" fill="#727272"/></svg>
<svg class="a" style="left:630.0px;top:391.0px" width="15" height="15" viewBox="0 0 15 15"><circle cx="7.5" cy="1.6" r="1.1" fill="#5aaaf8"/><path d="M7.5 2.5V4" stroke="#5aaaf8" stroke-width="1"/><rect x="2.2" y="4.2" width="10.6" height="8.6" rx="2.6" fill="#fff" stroke="#5aaaf8" stroke-width="1.2"/><rect x="0.6" y="6.8" width="1.4" height="3.4" rx="0.7" fill="#5aaaf8"/><rect x="13" y="6.8" width="1.4" height="3.4" rx="0.7" fill="#5aaaf8"/><circle cx="5.4" cy="8" r="0.9" fill="#555"/><circle cx="9.6" cy="8" r="0.9" fill="#555"/><path d="M5.5 10.6H9.5" stroke="#aaa" stroke-width="0.8"/></svg>
<div class="a" style="left:665.5px;top:385.6px;font-size:13px;line-height:26px;color:#3a3a3a;white-space:nowrap">Бот Максим</div>
<svg class="a" style="left:789.8px;top:388.6px" width="20" height="20"><circle cx="10" cy="10" r="8.8" stroke="#cfcfcf" stroke-width="1.1" fill="none"/><path d="M6.9 5.1L15.1 10L6.9 14.9Z" fill="#727272"/></svg>
<svg class="a" style="left:630.0px;top:426.8px" width="15" height="15" viewBox="0 0 15 15"><circle cx="7.5" cy="1.6" r="1.1" fill="#5aaaf8"/><path d="M7.5 2.5V4" stroke="#5aaaf8" stroke-width="1"/><rect x="2.2" y="4.2" width="10.6" height="8.6" rx="2.6" fill="#fff" stroke="#5aaaf8" stroke-width="1.2"/><rect x="0.6" y="6.8" width="1.4" height="3.4" rx="0.7" fill="#5aaaf8"/><rect x="13" y="6.8" width="1.4" height="3.4" rx="0.7" fill="#5aaaf8"/><circle cx="5.4" cy="8" r="0.9" fill="#555"/><circle cx="9.6" cy="8" r="0.9" fill="#555"/><path d="M5.5 10.6H9.5" stroke="#aaa" stroke-width="0.8"/></svg>
<div class="a" style="left:665.5px;top:421.4px;font-size:13px;line-height:26px;color:#3a3a3a;white-space:nowrap">Бот Татьяна</div>
<svg class="a" style="left:789.8px;top:424.4px" width="20" height="20"><circle cx="10" cy="10" r="8.8" stroke="#cfcfcf" stroke-width="1.1" fill="none"/><path d="M6.9 5.1L15.1 10L6.9 14.9Z" fill="#727272"/></svg>
<svg class="a" style="left:630.5px;top:463.0px" width="14" height="15" viewBox="0 0 14 15"><path d="M6.6 0.3C4.9 0.3 3.6 1.6 3.6 3.6C3.6 5.5 4.3 7.4 5.1 8.2V9.1C3.8 9.7 0.6 10.5 0.2 12.2V14H13V12.2C12.6 10.5 9.4 9.7 8.1 9.1V8.2C8.9 7.4 9.6 5.5 9.6 3.6C9.6 1.6 8.3 0.3 6.6 0.3Z" fill="#108bfe"/></svg>
<div class="a" style="left:665.5px;top:457.2px;font-size:13px;line-height:26px;color:#3a3a3a;white-space:nowrap">Денис</div>
<svg class="a" style="left:789.8px;top:460.2px" width="20" height="20"><circle cx="10" cy="10" r="8.8" stroke="#cfcfcf" stroke-width="1.1" fill="none"/><path d="M6.9 5.1L15.1 10L6.9 14.9Z" fill="#727272"/></svg>
<svg class="a" style="left:630.5px;top:498.8px" width="14" height="15" viewBox="0 0 14 15"><path d="M6.6 0.3C4.9 0.3 3.6 1.6 3.6 3.6C3.6 5.5 4.3 7.4 5.1 8.2V9.1C3.8 9.7 0.6 10.5 0.2 12.2V14H13V12.2C12.6 10.5 9.4 9.7 8.1 9.1V8.2C8.9 7.4 9.6 5.5 9.6 3.6C9.6 1.6 8.3 0.3 6.6 0.3Z" fill="#108bfe"/></svg>
<div class="a" style="left:665.5px;top:493.0px;font-size:13px;line-height:26px;color:#3a3a3a;white-space:nowrap">Захар</div>
<svg class="a" style="left:789.8px;top:496.0px" width="20" height="20"><circle cx="10" cy="10" r="8.8" stroke="#cfcfcf" stroke-width="1.1" fill="none"/><path d="M6.9 5.1L15.1 10L6.9 14.9Z" fill="#727272"/></svg>
<svg class="a" style="left:630.5px;top:534.6px" width="14" height="15" viewBox="0 0 14 15"><path d="M6.6 0.3C4.9 0.3 3.6 1.6 3.6 3.6C3.6 5.5 4.3 7.4 5.1 8.2V9.1C3.8 9.7 0.6 10.5 0.2 12.2V14H13V12.2C12.6 10.5 9.4 9.7 8.1 9.1V8.2C8.9 7.4 9.6 5.5 9.6 3.6C9.6 1.6 8.3 0.3 6.6 0.3Z" fill="#108bfe"/></svg>
<div class="a" style="left:665.5px;top:528.8px;font-size:13px;line-height:26px;color:#3a3a3a;white-space:nowrap">Павел</div>
<svg class="a" style="left:789.8px;top:531.8px" width="20" height="20"><circle cx="10" cy="10" r="8.8" stroke="#cfcfcf" stroke-width="1.1" fill="none"/><path d="M6.9 5.1L15.1 10L6.9 14.9Z" fill="#727272"/></svg>
<svg class="a" style="left:630.5px;top:570.4px" width="14" height="15" viewBox="0 0 14 15"><path d="M6.6 0.3C4.9 0.3 3.6 1.6 3.6 3.6C3.6 5.5 4.3 7.4 5.1 8.2V9.1C3.8 9.7 0.6 10.5 0.2 12.2V14H13V12.2C12.6 10.5 9.4 9.7 8.1 9.1V8.2C8.9 7.4 9.6 5.5 9.6 3.6C9.6 1.6 8.3 0.3 6.6 0.3Z" fill="#108bfe"/></svg>
<div class="a" style="left:665.5px;top:564.6px;font-size:13px;line-height:26px;color:#3a3a3a;white-space:nowrap">Эрмил</div>
<svg class="a" style="left:789.8px;top:567.6px" width="20" height="20"><circle cx="10" cy="10" r="8.8" stroke="#cfcfcf" stroke-width="1.1" fill="none"/><path d="M6.9 5.1L15.1 10L6.9 14.9Z" fill="#727272"/></svg>
<svg class="a" style="left:630.2px;top:606.2px" width="14" height="15" viewBox="0 0 14 15"><path d="M7 0.2C4.6 0.2 3 1.7 3 4V8.5H5.3V9.2C3.8 9.8 0.8 10.4 0.4 12.2V14H13.6V12.2C13.2 10.4 10.2 9.8 8.7 9.2V8.5H11V4C11 1.7 9.4 0.2 7 0.2Z" fill="#fe64a3"/></svg>
<div class="a" style="left:665.5px;top:600.4px;font-size:13px;line-height:26px;color:#3a3a3a;white-space:nowrap">Алла</div>
<svg class="a" style="left:789.8px;top:603.4px" width="20" height="20"><circle cx="10" cy="10" r="8.8" stroke="#cfcfcf" stroke-width="1.1" fill="none"/><path d="M6.9 5.1L15.1 10L6.9 14.9Z" fill="#727272"/></svg>
<svg class="a" style="left:630.2px;top:642.0px" width="14" height="15" viewBox="0 0 14 15"><path d="M7 0.2C4.6 0.2 3 1.7 3 4V8.5H5.3V9.2C3.8 9.8 0.8 10.4 0.4 12.2V14H13.6V12.2C13.2 10.4 10.2 9.8 8.7 9.2V8.5H11V4C11 1.7 9.4 0.2 7 0.2Z" fill="#fe64a3"/></svg>
<div class="a" style="left:665.5px;top:636.2px;font-size:13px;line-height:26px;color:#3a3a3a;white-space:nowrap">Джейн</div>
<svg class="a" style="left:789.8px;top:639.2px" width="20" height="20"><circle cx="10" cy="10" r="8.8" stroke="#cfcfcf" stroke-width="1.1" fill="none"/><path d="M6.9 5.1L15.1 10L6.9 14.9Z" fill="#727272"/></svg>
<svg class="a" style="left:630.2px;top:677.8px" width="14" height="15" viewBox="0 0 14 15"><path d="M7 0.2C4.6 0.2 3 1.7 3 4V8.5H5.3V9.2C3.8 9.8 0.8 10.4 0.4 12.2V14H13.6V12.2C13.2 10.4 10.2 9.8 8.7 9.2V8.5H11V4C11 1.7 9.4 0.2 7 0.2Z" fill="#fe64a3"/></svg>
<div class="a" style="left:665.5px;top:672.0px;font-size:13px;line-height:26px;color:#3a3a3a;white-space:nowrap">Екатерина</div>
<svg class="a" style="left:789.8px;top:675.0px" width="20" height="20"><circle cx="10" cy="10" r="8.8" stroke="#cfcfcf" stroke-width="1.1" fill="none"/><path d="M6.9 5.1L15.1 10L6.9 14.9Z" fill="#727272"/></svg>
<div class="a" style="left:189px;top:236px;width:626px;height:458px;box-shadow:inset 0 0 7px 1px rgba(0,0,0,0.4);border-radius:7px"></div>
<!--/PANEL-->
</body></html>
